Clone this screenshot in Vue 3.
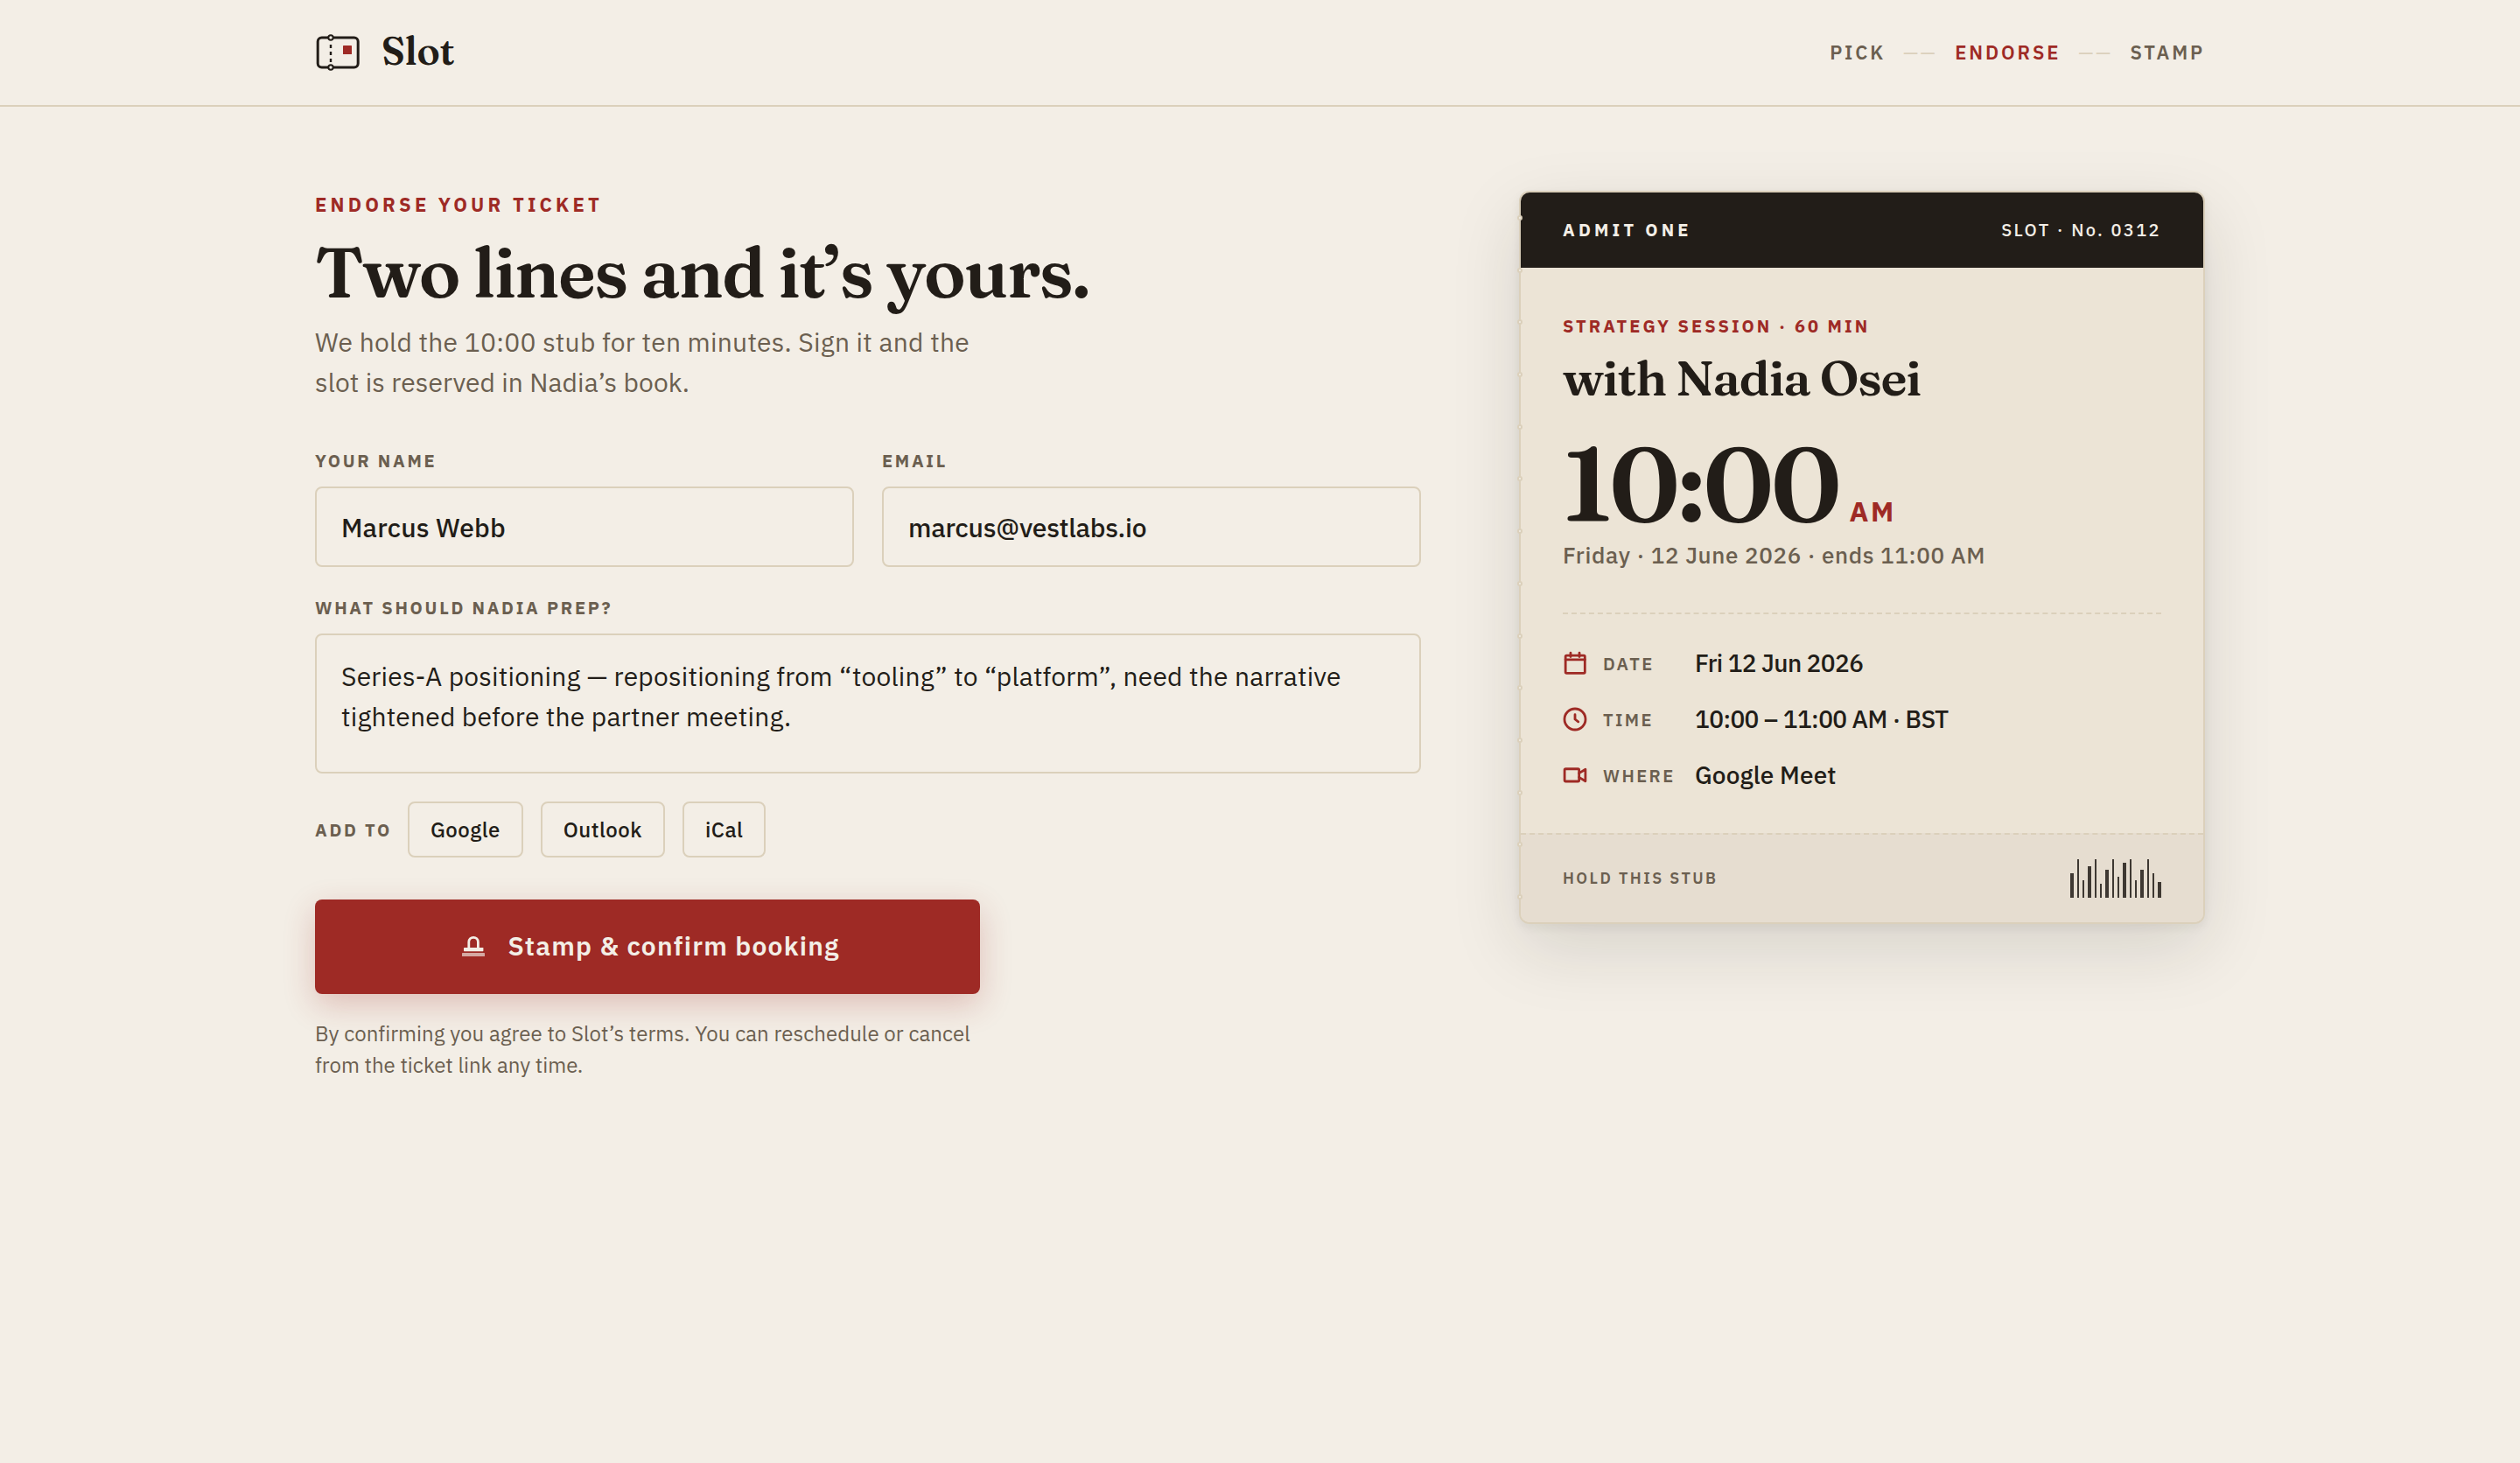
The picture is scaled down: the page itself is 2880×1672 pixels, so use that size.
<template>
  <div class="page">
    <header class="topbar">
      <div class="brand">
        <svg class="brand-mark" viewBox="0 0 56 56" fill="none">
          <rect x="3.2" y="11" width="46" height="34" rx="4.5" stroke="#221d18" stroke-width="3" />
          <path d="M18 19v20" stroke="#221d18" stroke-width="2.4" stroke-dasharray="4 4" />
          <circle cx="18" cy="11" r="2.7" fill="#f3eee6" stroke="#221d18" stroke-width="2" />
          <circle cx="18" cy="45" r="2.7" fill="#f3eee6" stroke="#221d18" stroke-width="2" />
          <rect x="32" y="20" width="10" height="10" rx="0.6" fill="#9e2a25" />
        </svg>
        <span class="brand-name">Slot</span>
      </div>
      <nav class="steps">
        <template v-for="(step, i) in steps" :key="step">
          <span v-if="i" class="step-rule">——</span>
          <span class="step" :class="{ active: step === activeStep }">{{ step }}</span>
        </template>
      </nav>
    </header>

    <main class="layout">
      <form class="endorse" @submit.prevent>
        <p class="eyebrow">ENDORSE YOUR TICKET</p>
        <h1 class="title">Two lines and it’s yours.</h1>
        <p class="lede">
          We hold the 10:00 stub for ten minutes. Sign it and the slot is reserved in Nadia’s book.
        </p>

        <div class="field-row">
          <label class="field">
            <span class="label">YOUR NAME</span>
            <input v-model="name" class="input" type="text" />
          </label>
          <label class="field">
            <span class="label">EMAIL</span>
            <input v-model="email" class="input email" type="text" />
          </label>
        </div>
        <label class="field prep">
          <span class="label">WHAT SHOULD NADIA PREP?</span>
          <textarea v-model="prep" class="input textarea" spellcheck="false"></textarea>
        </label>

        <div class="calendars">
          <span class="label">ADD TO</span>
          <button v-for="cal in calendars" :key="cal" type="button" class="chip">{{ cal }}</button>
        </div>

        <button class="confirm" type="submit">
          <svg class="stamp" viewBox="0 0 40 40" fill="none">
            <path d="M15.8 23v-7.4a5.3 5.3 0 0 1 10.6 0V23" stroke="#f3eee6" stroke-width="2.8" />
            <rect x="10" y="22" width="22.4" height="4.2" rx="0.6" fill="#f3eee6" />
            <rect x="8" y="28" width="26" height="4" rx="0.6" fill="#f3eee6" opacity="0.65" />
          </svg>
          <span>Stamp &amp; confirm booking</span>
        </button>
        <p class="fine">
          By confirming you agree to Slot’s terms. You can reschedule or cancel from the ticket link
          any time.
        </p>
      </form>

      <aside class="ticket">
        <div class="perforation">
          <i v-for="n in 14" :key="n" class="hole"></i>
        </div>
        <div class="ticket-head">
          <span class="admit">ADMIT ONE</span>
          <span class="serial">SLOT · No. 0312</span>
        </div>
        <div class="ticket-body">
          <p class="session">STRATEGY SESSION · 60 MIN</p>
          <h2 class="host">with Nadia Osei</h2>
          <div class="time">
            <span class="clock">10:00</span>
            <span class="meridiem">AM</span>
          </div>
          <p class="day">Friday · 12 June 2026 · ends 11:00 AM</p>
          <dl class="details">
            <div v-for="row in details" :key="row.label" class="detail">
              <svg class="detail-icon" viewBox="0 0 24 24">
                <path v-for="d in row.paths" :key="d" :d="d" />
              </svg>
              <dt>{{ row.label }}</dt>
              <dd :class="{ numeric: row.numeric }">{{ row.value }}</dd>
            </div>
          </dl>
        </div>
        <div class="stub">
          <span class="hold">HOLD THIS STUB</span>
          <div class="barcode">
            <i
              v-for="(h, i) in bars"
              :key="i"
              class="bar"
              :class="{ wide: i % 3 === 0 }"
              :style="{ height: h + 'px' }"
            ></i>
          </div>
        </div>
      </aside>
    </main>
  </div>
</template>

<script setup>
import { ref } from 'vue'

const steps = ['PICK', 'ENDORSE', 'STAMP']
const activeStep = 'ENDORSE'
const calendars = ['Google', 'Outlook', 'iCal']

const name = ref('Marcus Webb')
const email = ref('marcus@vestlabs.io')
const prep = ref(
  'Series-A positioning — repositioning from “tooling” to “platform”, need the narrative tightened before the partner meeting.'
)

const details = [
  {
    label: 'DATE',
    value: 'Fri 12 Jun 2026',
    numeric: true,
    paths: ['M3.8 4.4h16.8q1.1 0 1.1 1.1v15.1q0 1.1-1.1 1.1H3.800q-1.100 0-1.100-1.100V5.500q0-1.100 1.100-1.100z', 'M2.7 8.4h19', 'M7.7 1.800v3.800M16.300 1.800v3.800']
  },
  {
    label: 'TIME',
    value: '10:00 – 11:00 AM · BST',
    numeric: true,
    paths: ['M12 1.7a10.3 10.3 0 1 0 0 20.6a10.3 10.3 0 1 0 0-20.6z', 'M12 7.4V12l3.200 2.400']
  },
  {
    label: 'WHERE',
    value: 'Google Meet',
    paths: ['M2.9 5.8h12q1.100 0 1.100 1.100v10q0 1.100-1.100 1.100h-12q-1.100 0-1.100-1.100v-10q0-1.100 1.100-1.100z', 'M16 10l6.200-3.800v11.600L16 14']
  }
]

const bars = [28, 44, 20, 36, 44, 16, 32, 44, 24, 40, 44, 20, 32, 44, 28, 18]
</script>

<style>
body {
  margin: 0;
  background: #f3eee6;
}
</style>

<style scoped>
.page {
  min-height: 1672px;
  background: #f3eee6;
  color: #221d18;
  font-family: 'IBM Plex Sans', 'Open Sans', sans-serif;
}

p,
h1,
h2,
dl,
dd {
  margin: 0;
}

.topbar {
  display: flex;
  justify-content: space-between;
  align-items: center;
  height: 120px;
  padding: 0 360px;
  border-bottom: 2px solid #dbd0bb;
}
.brand {
  display: flex;
  align-items: center;
  gap: 20px;
}
.brand-mark {
  width: 56px;
  height: 56px;
}
.brand-name {
  padding-bottom: 3px;
  font-family: 'Fraunces', 'Liberation Serif', serif;
  font-size: 44px;
  font-weight: 600;
  line-height: 53px;
  letter-spacing: -0.006em;
}
.steps {
  display: flex;
  align-items: center;
  gap: 20px;
  padding-bottom: 1px;
  font-size: 22px;
  font-weight: 600;
  letter-spacing: 0.13em;
  color: #6b5f50;
}
.active {
  color: #9e2a25;
}
.step-rule {
  color: #dbd0bb;
  font-weight: 400;
  letter-spacing: 0.11em;
}

.layout {
  display: grid;
  grid-template-columns: 1264px 784px;
  gap: 112px;
  align-items: start;
  padding: 96px 360px 0;
}

.eyebrow {
  font-size: 22px;
  font-weight: 700;
  line-height: 31px;
  letter-spacing: 0.19em;
  color: #9e2a25;
}
.title {
  margin-top: 19px;
  font-family: 'Fraunces', 'Liberation Serif', serif;
  font-size: 80px;
  font-weight: 600;
  line-height: 86px;
  letter-spacing: -1.8px;
}
.lede {
  max-width: 760px;
  margin-top: 14px;
  font-size: 30px;
  line-height: 46px;
  letter-spacing: 0.1px;
  color: #6b5f50;
}
.lede::first-line {
  letter-spacing: 0.27px;
}

.field-row {
  display: grid;
  grid-template-columns: 1fr 1fr;
  gap: 32px;
  margin-top: 52px;
}
.field {
  display: flex;
  flex-direction: column;
  gap: 15px;
}
.prep {
  margin-top: 32px;
}
.label {
  padding-top: 1px;
  font-size: 20px;
  font-weight: 700;
  line-height: 28px;
  letter-spacing: 0.135em;
  color: #6b5f50;
}
.input {
  box-sizing: border-box;
  width: 100%;
  height: 92px;
  padding: 0 28px;
  border: 2px solid #dbd0bb;
  border-radius: 8px;
  background: transparent;
  color: #221d18;
  font-family: inherit;
  font-size: 30px;
  font-weight: 500;
  letter-spacing: 0.15px;
  outline: none;
}
.email {
  letter-spacing: -0.25px;
}
.textarea {
  height: 160px;
  padding: 24px 28px;
  font-weight: 400;
  line-height: 46px;
  letter-spacing: 0.2px;
  overflow: hidden;
  resize: none;
}

.calendars {
  display: flex;
  align-items: center;
  gap: 20px;
  margin-top: 32px;
}
.calendars .label {
  margin-right: -2px;
}
.chip {
  height: 64px;
  padding: 0 24px;
  border: 2px solid #dbd0bb;
  border-radius: 8px;
  background: transparent;
  color: #221d18;
  font-family: inherit;
  font-size: 24px;
  font-weight: 500;
  letter-spacing: 0.02em;
}

.confirm {
  display: flex;
  align-items: center;
  justify-content: center;
  gap: 20px;
  width: 760px;
  height: 108px;
  margin-top: 48px;
  padding: 0 0 3px;
  border: none;
  border-radius: 8px;
  background: #9e2a25;
  box-shadow: 0 12px 36px rgba(158, 42, 37, 0.24);
  color: #f3eee6;
  font-family: inherit;
  font-size: 30px;
  font-weight: 600;
  letter-spacing: 0.04em;
}
.stamp {
  width: 40px;
  height: 40px;
}
.fine {
  max-width: 760px;
  margin-top: 27px;
  font-size: 24px;
  line-height: 36px;
  color: #6b5f50;
}
.fine::first-line {
  letter-spacing: 0.045px;
}

.ticket {
  position: relative;
  border: 2px solid #dbd0bb;
  border-radius: 12px;
  background: #ece4d6;
  box-shadow:
    0 4px 12px rgba(34, 29, 24, 0.06),
    0 28px 80px rgba(34, 29, 24, 0.13);
}
/* punched holes sit on the ticket's left border */
.perforation {
  position: absolute;
  top: 26px;
  bottom: 26px;
  left: -4px;
  display: flex;
  flex-direction: column;
  justify-content: space-between;
}
.hole {
  box-sizing: border-box;
  width: 6px;
  height: 6px;
  border: 2px solid #dbd0bb;
  border-radius: 50%;
  background: #f3eee6;
}
.ticket-head {
  box-sizing: border-box;
  display: flex;
  justify-content: space-between;
  align-items: center;
  height: 86px;
  padding: 0 48px 2px;
  border-radius: 10px 10px 0 0;
  background: #221d18;
  color: #f3eee6;
  font-size: 20px;
}
.admit {
  font-weight: 700;
  letter-spacing: 0.21em;
}
.serial {
  font-weight: 500;
  letter-spacing: 0.12em;
}
.ticket-body {
  height: 646px;
  box-sizing: border-box;
  padding: 53px 48px 0;
}
.session {
  font-size: 20px;
  font-weight: 700;
  line-height: 28px;
  letter-spacing: 0.15em;
  color: #9e2a25;
}
.host {
  margin-top: 11px;
  font-family: 'Fraunces', 'Liberation Serif', serif;
  font-size: 56px;
  font-weight: 600;
  line-height: 67px;
  letter-spacing: -1.2px;
}
.time {
  display: flex;
  align-items: baseline;
  gap: 12px;
  height: 120px;
  margin-top: 28px;
}
.clock {
  font-family: 'Fraunces', 'Liberation Serif', serif;
  font-size: 120px;
  font-weight: 600;
  line-height: 120px;
  letter-spacing: -0.03em;
}
.meridiem {
  font-size: 32px;
  font-weight: 700;
  line-height: 40px;
  letter-spacing: 0.08em;
  color: #9e2a25;
}
.day {
  margin-top: 3px;
  font-size: 26px;
  font-weight: 500;
  line-height: 36px;
  letter-spacing: 0.025em;
  color: #6b5f50;
}
.details {
  display: flex;
  flex-direction: column;
  gap: 24px;
  margin-top: 48px;
  padding-top: 36px;
  border-top: 2px dashed #dbd0bb;
}
.detail {
  display: flex;
  align-items: center;
  height: 40px;
}
.detail-icon {
  width: 28px;
  height: 28px;
  margin-right: 18px;
  overflow: visible;
  fill: none;
  stroke: #9e2a25;
  stroke-width: 2.4;
  stroke-linecap: round;
  stroke-linejoin: round;
}
dt {
  width: 105px;
  font-size: 20px;
  font-weight: 600;
  letter-spacing: 0.12em;
  color: #6b5f50;
}
dd {
  padding-bottom: 2px;
  font-size: 28px;
  font-weight: 500;
  letter-spacing: 0.1px;
}
.numeric {
  letter-spacing: -0.6px;
}
.stub {
  display: flex;
  justify-content: space-between;
  align-items: center;
  height: 100px;
  padding: 0 48px;
  border-top: 2px dashed #dbd0bb;
  border-radius: 0 0 10px 10px;
  background: #e6ddd0;
}
.hold {
  padding-bottom: 2px;
  font-size: 18px;
  font-weight: 600;
  letter-spacing: 0.135em;
  color: #6b5f50;
}
.barcode {
  display: flex;
  align-items: flex-end;
  gap: 4px;
  height: 44px;
}
.bar {
  width: 2px;
  background: #3e3832;
}
.wide {
  width: 4px;
}
</style>
